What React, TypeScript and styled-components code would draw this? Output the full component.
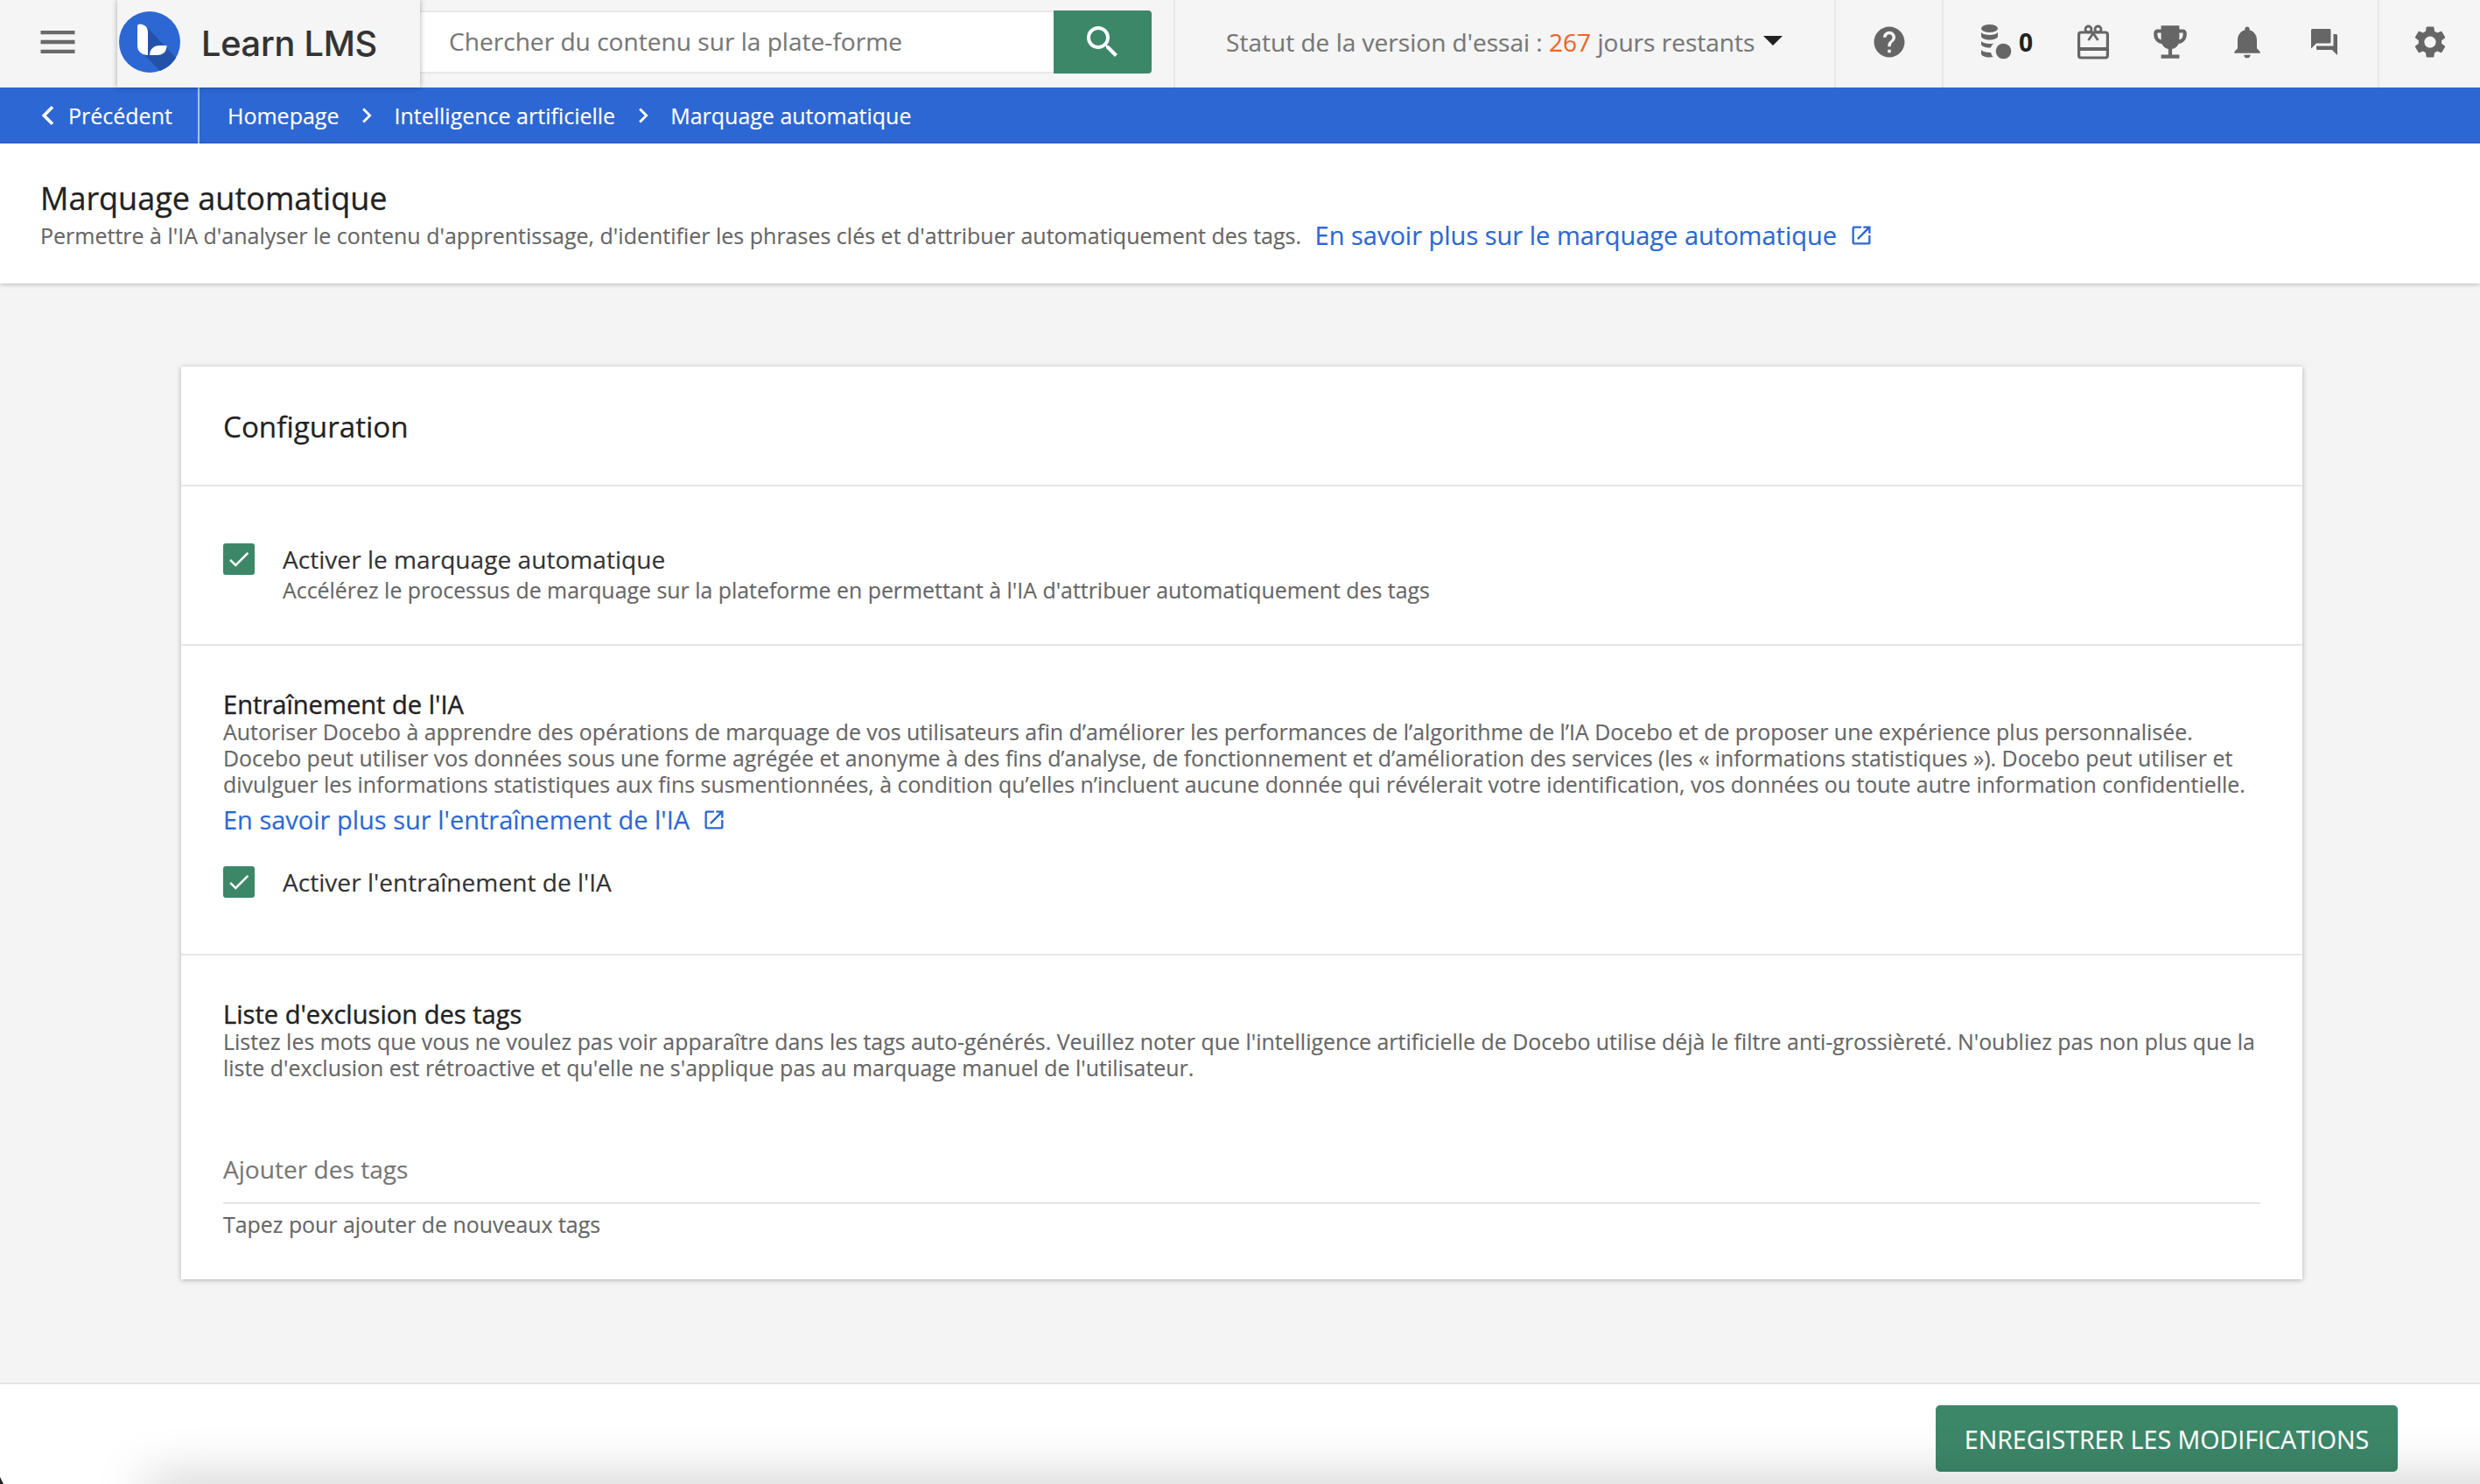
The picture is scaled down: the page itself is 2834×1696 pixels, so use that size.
import React from "react";
import styled, { createGlobalStyle } from "styled-components";
import { MdMenu, MdSearch, MdHelp, MdNotifications, MdSettings, MdQuestionAnswer, MdEmojiEvents, MdChevronLeft, MdChevronRight, MdOpenInNew, MdCheck } from "react-icons/md";

const Global = createGlobalStyle`
  html, body { margin: 0; padding: 0; background: #f4f4f4; }
  body { font-family: "Open Sans", "Noto Sans", sans-serif; overflow: hidden; -webkit-text-stroke-width: .15px; }
  * { box-sizing: border-box; }
`;

const Page = styled.div`
  width: 2834px; height: 1696px; display: flex; flex-direction: column; overflow: hidden; background: #f4f4f4;
`;
const Header = styled.header`
  height: 100px; flex: none; display: flex; background: #f5f5f5; color: #666;
`;
const MenuCell = styled.div`
  width: 134px; display: flex; align-items: flex-start; justify-content: center; padding-top: 22px; padding-right: 2px;
  color: #6a6a6a; font-size: 52px; line-height: 0;
`;
const LogoBox = styled.div`
  width: 346px; height: 100px; display: flex; align-items: flex-start; gap: 24px; padding: 13px 0 0 2px;
  background: #f5f5f5; box-shadow: 0 0 6px rgba(0,0,0,.32); position: relative; z-index: 2;
`;
const LogoText = styled.span`
  font-family: Inter, sans-serif; font-weight: 500; font-size: 39.6px; line-height: 70px; letter-spacing: -0.2px; color: #333; margin-top: 2px;
`;
const Search = styled.div`
  width: 836px; height: 72px; margin-top: 12px; display: flex;
`;
const SearchField = styled.div`
  flex: 1; background: #fff; border-top: 2px solid #e8e8e8; border-bottom: 2px solid #e8e8e8; display: flex; align-items: center;
  padding-left: 33px; font-size: 28.1px; color: #777; padding-bottom: 2px;
`;
const SearchButton = styled.div`
  width: 112px; background: #3d8769; border-radius: 0 4px 4px 0; display: flex; align-items: center; justify-content: center;
  color: #fff; font-size: 48px; line-height: 0;
`;
const Trial = styled.div`
  margin-left: 25px; width: 755px; border-left: 2px solid #e8e8e8; padding: 0 0 4px 58px; display: flex; align-items: center;
  font-size: 28.05px; color: #777; white-space: pre;
`;
const Days = styled.span`color: #e8682f;`;
const Caret = styled.span`
  display: inline-block; width: 0; height: 0; border-left: 11px solid transparent; border-right: 11px solid transparent; border-top: 11px solid #222;
  margin-left: 10px; margin-bottom: 4px;
`;
const HelpCell = styled.div`
  width: 123px; border-left: 2px solid #e8e8e8; display: flex; align-items: center; justify-content: center; font-size: 42px; color: #666; padding-bottom: 4px;
`;
const IconsCell = styled.div`
  width: 498px; border-left: 2px solid #e8e8e8; display: flex; align-items: center; padding: 0 0 4px 5px; color: #666;
`;
const IconSlot = styled.div<{ $w: number; $size?: number }>`
  width: ${p => p.$w}px; display: flex; align-items: center; justify-content: center; font-size: ${p => p.$size ?? 42}px; line-height: 0;
`;
const Count = styled.span`
  font-size: 28px; font-weight: 700; color: #222; margin-left: 8px; line-height: 30px;
`;
const CoinsWrap = styled.span`display: flex; align-items: center; margin-left: 12px;`;
const GearCell = styled.div`
  flex: 1; border-left: 2px solid #e8e8e8; display: flex; align-items: center; justify-content: center; font-size: 44px; color: #666; padding-bottom: 4px;
`;
const Crumbs = styled.nav`
  height: 64px; flex: none; background: #2d67d4; color: #fff; display: flex; align-items: center; font-size: 25px;
`;
const Back = styled.div`
  width: 228px; height: 64px; border-right: 2px solid rgba(255,255,255,.6); display: flex; align-items: center; padding-left: 33px;
`;
const BackIcon = styled.span`font-size: 44px; line-height: 0; margin-right: 1px; stroke: #fff; stroke-width: .8px;`;
const Trail = styled.div`display: flex; align-items: center; padding-left: 32px;`;
const Sep = styled.span`font-size: 34px; line-height: 0; width: 65px; display: flex; justify-content: center; margin: 0 -1px;`;
const TitleBar = styled.section`
  height: 160px; flex: none; background: #fff; padding: 40px 46px 0; box-shadow: 0 1px 5px rgba(0,0,0,.25); position: relative; z-index: 1;
`;
const Title = styled.h1`
  margin: 0; font-size: 36px; line-height: 46px; font-weight: 400; color: #222; -webkit-text-stroke: .3px #222;
`;
const TitleDesc = styled.div`
  display: flex; align-items: center; font-size: 25px; color: #666; margin-top: -2px; white-space: pre; height: 42px;
  & > a { margin-left: -4px; }
`;
const Link = styled.a`
  color: #2d67d4; font-size: 29px; display: inline-flex; align-items: center; white-space: pre; line-height: 40px;
`;
const LinkIcon = styled.span`font-size: 28px; line-height: 0; margin-left: 14px;`;
const Main = styled.main`
  flex: 1; min-height: 0; padding: 95px 203px 0 207px;
`;
const Card = styled.section`
  background: #fff; height: 1043px; box-shadow: 0 1px 6px rgba(0,0,0,.28); display: flex; flex-direction: column;
`;
const CardHead = styled.div`
  height: 137px; flex: none; padding: 2px 48px 0; display: flex; align-items: center; font-size: 33.2px; color: #222; border-bottom: 2px solid #e6e6e6; -webkit-text-stroke: .25px #222;
`;
const Section = styled.div<{ $h: number; $pt: number }>`
  height: ${p => p.$h}px; flex: none; padding: ${p => p.$pt}px 48px 0; border-bottom: 2px solid #e6e6e6;
  &:last-child { border-bottom: 0; }
`;
const CheckRow = styled.div`display: flex; align-items: flex-start; gap: 32px;`;
const CheckBox = styled.span`
  width: 36px; height: 36px; flex: none; background: #3d8769; border-radius: 3px; color: #fff; display: flex; align-items: center; justify-content: center; font-size: 30px; line-height: 0;
`;
const CheckText = styled.div`display: flex; flex-direction: column;`;
const CheckLabel = styled.span`font-size: 28.1px; line-height: 36px; color: #333;`;
const CheckHint = styled.span`font-size: 24.9px; line-height: 34px; color: #666;`;
const SubTitle = styled.h2`
  margin: 0; font-size: 29.1px; line-height: 34px; font-weight: 400; color: #222; -webkit-text-stroke: .4px #222;
`;
const Para = styled.p`
  margin: 0; font-size: 24.9px; line-height: 29.8px; color: #666; white-space: pre;
`;
const LinkRow = styled.div`margin-top: 4px; height: 44px; display: flex; align-items: center;`;
const Gapped = styled.div`margin-top: 31px;`;
const TagInput = styled.div`
  margin-top: 62px; height: 78px; display: flex; align-items: center; border-bottom: 2px solid #e6e6e6; font-size: 28.1px; color: #777;
`;
const TagHelp = styled.div`font-size: 24.9px; line-height: 46px; color: #666;`;
const Footer = styled.footer`
  height: 116px; flex: none; background: #fff; border-top: 2px solid #e6e6e6; display: flex; justify-content: flex-end; padding: 24px 94px 0 0; position: relative; overflow: hidden;
  &::after {
    content: ""; position: absolute; left: 170px; right: -100px; bottom: -30px; height: 30px; box-shadow: 0 0 60px 2px rgba(0,0,0,.26); background: #999;
  }
  &::before {
    content: ""; position: absolute; left: 0; bottom: 0; border-bottom: 8px solid #222; border-right: 4px solid transparent;
  }
`;
const Save = styled.button`
  width: 528px; height: 76px; background: #3d8769; color: #fff; border: 0; border-radius: 5px; font: 500 28.6px "Open Sans", sans-serif; padding: 0; position: relative; z-index: 0;
`;

const Coins = () => (
  <svg width="36" height="40" viewBox="0 0 36 40" fill="currentColor">
    <ellipse cx="10.500" cy="4.500" rx="9.500" ry="4.500" />
    <path d="M1 9c2 2.200 5.600 3 9.500 3s7.500-.8 9.500-3v4.500c0 2.200-4.200 4-9.500 4s-9.500-1.800-9.500-4z" />
    <path d="M1 19c2 2.200 5.600 3 9.500 3 1.800 0 3.500-.2 5-.6-1.700 1.200-3 3-3.600 5-.5 0-.9.100-1.400.100-5.300 0-9.500-1.800-9.500-4z" />
    <path d="M1 29c2 2.200 5.600 3 9.500 3h1.500c.4 1.900 1.300 3.600 2.700 5-1.200.3-2.700.5-4.200.5-5.300 0-9.500-1.800-9.500-4z" />
    <circle cx="26.500" cy="30.500" r="8.800" />
  </svg>
);
const Gift = () => (
  <svg width="36" height="40" viewBox="0 0 36 40" fill="none" stroke="currentColor" strokeWidth="3.200">
    <rect x="1.600" y="9" width="32.800" height="29" rx="2.500" />
    <path d="M1.600 28h32.800" strokeWidth="4" />
    <path d="M18 10l-5.500 8M18 10l5.500 8" strokeWidth="2.800" />
    <circle cx="12.500" cy="5.500" r="3.500" strokeWidth="2.800" />
    <circle cx="23.500" cy="5.500" r="3.500" strokeWidth="2.800" />
  </svg>
);
const LogoMark = () => (
  <svg width="70" height="70" viewBox="0 0 70 70">
    <circle cx="35" cy="35" r="35" fill="#2d67d4" />
    <path d="M31 17l34 36a35 35 0 0 1-18 15L21 42z" fill="#2253a9" />
    <path d="M21 17c0-1.500 1-2.500 2.500-2.500C29 14.500 33 18 33 24v26c-7 0-12-4-12-11z" fill="#fff" />
    <path d="M35 50c0-7 5-11 11-11h8.500c0 7-4 11-11 11z" fill="#fff" />
  </svg>
);

export default function App() {
  return (
    <Page>
      <Global />
      <Header>
        <MenuCell><MdMenu /></MenuCell>
        <LogoBox><LogoMark /><LogoText>Learn LMS</LogoText></LogoBox>
        <Search>
          <SearchField>Chercher du contenu sur la plate-forme</SearchField>
          <SearchButton><MdSearch /></SearchButton>
        </Search>
        <Trial>Statut de la version d'essai : <Days>267</Days> jours restants<Caret /></Trial>
        <HelpCell><MdHelp /></HelpCell>
        <IconsCell>
          <IconSlot $w={122}><CoinsWrap><Coins /><Count>0</Count></CoinsWrap></IconSlot>
          <IconSlot $w={88}><Gift /></IconSlot>
          <IconSlot $w={88} $size={50}><MdEmojiEvents /></IconSlot>
          <IconSlot $w={88} $size={44}><MdNotifications /></IconSlot>
          <IconSlot $w={88} $size={36}><MdQuestionAnswer /></IconSlot>
        </IconsCell>
        <GearCell><MdSettings /></GearCell>
      </Header>
      <Crumbs>
        <Back><BackIcon><MdChevronLeft /></BackIcon>Précédent</Back>
        <Trail>
          <span>Homepage</span>
          <Sep><MdChevronRight /></Sep>
          <span>Intelligence artificielle</span>
          <Sep><MdChevronRight /></Sep>
          <span>Marquage automatique</span>
        </Trail>
      </Crumbs>
      <TitleBar>
        <Title>Marquage automatique</Title>
        <TitleDesc>Permettre à l'IA d'analyser le contenu d'apprentissage, d'identifier les phrases clés et d'attribuer automatiquement des tags.   <Link>En savoir plus sur le marquage automatique<LinkIcon><MdOpenInNew /></LinkIcon></Link></TitleDesc>
      </TitleBar>
      <Main>
        <Card>
          <CardHead>Configuration</CardHead>
          <Section $h={182} $pt={65}>
            <CheckRow>
              <CheckBox><MdCheck /></CheckBox>
              <CheckText>
                <CheckLabel>Activer le marquage automatique</CheckLabel>
                <CheckHint>Accélérez le processus de marquage sur la plateforme en permettant à l'IA d'attribuer automatiquement des tags</CheckHint>
              </CheckText>
            </CheckRow>
          </Section>
          <Section $h={354} $pt={50}>
            <SubTitle>Entraînement de l'IA</SubTitle>
            <Para>{`Autoriser Docebo à apprendre des opérations de marquage de vos utilisateurs afin d’améliorer les performances de l’algorithme de l’IA Docebo et de proposer une expérience plus personnalisée.
Docebo peut utiliser vos données sous une forme agrégée et anonyme à des fins d’analyse, de fonctionnement et d’amélioration des services (les « informations statistiques »). Docebo peut utiliser et
divulguer les informations statistiques aux fins susmentionnées, à condition qu’elles n’incluent aucune donnée qui révélerait votre identification, vos données ou toute autre information confidentielle.`}</Para>
            <LinkRow><Link>En savoir plus sur l'entraînement de l'IA<LinkIcon><MdOpenInNew /></LinkIcon></Link></LinkRow>
            <Gapped>
              <CheckRow>
                <CheckBox><MdCheck /></CheckBox>
                <CheckLabel>Activer l'entraînement de l'IA</CheckLabel>
              </CheckRow>
            </Gapped>
          </Section>
          <Section $h={370} $pt={50}>
            <SubTitle>Liste d'exclusion des tags</SubTitle>
            <Para>{`Listez les mots que vous ne voulez pas voir apparaître dans les tags auto-générés. Veuillez noter que l'intelligence artificielle de Docebo utilise déjà le filtre anti-grossièreté. N'oubliez pas non plus que la
liste d'exclusion est rétroactive et qu'elle ne s'applique pas au marquage manuel de l'utilisateur.`}</Para>
            <TagInput>Ajouter des tags</TagInput>
            <TagHelp>Tapez pour ajouter de nouveaux tags</TagHelp>
          </Section>
        </Card>
      </Main>
      <Footer><Save>ENREGISTRER LES MODIFICATIONS</Save></Footer>
    </Page>
  );
}
